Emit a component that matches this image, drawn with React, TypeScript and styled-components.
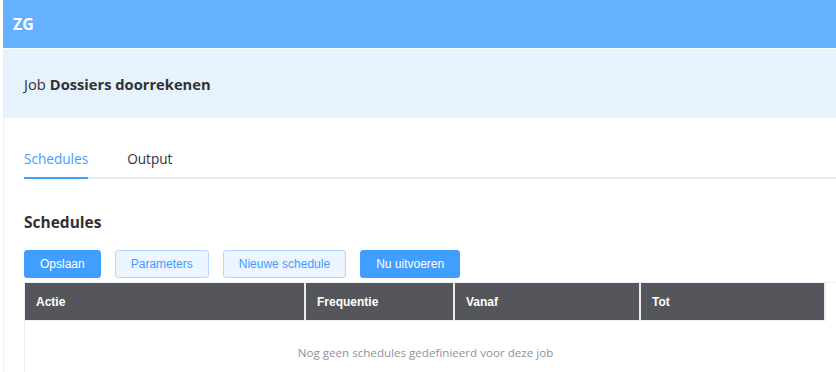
import styled, { createGlobalStyle } from "styled-components"

const GlobalStyle = createGlobalStyle`
    html, body {
        margin: 0;
        padding: 0;
        background: #ffffff;
        font-family: "Open Sans", "Noto Sans", Arial, sans-serif;
        color: #303133;
    }
`

const Page = styled.div`
    padding-left: 3px;
    height: 372px;
    overflow: hidden;
`

const TopBar = styled.header`
    height: 48px;
    background: #66b1ff;
    display: flex;
    align-items: center;
    padding-left: 10px;
    color: #ffffff;
    font-weight: 700;
    font-size: 16px;
    border-bottom: 1px solid #ffffff;
`

const TitleBand = styled.div`
    height: 69px;
    background: #e6f2fe;
    display: flex;
    align-items: center;
    padding-left: 21px;
    font-size: 14.7px;
    color: #303133;

    b {
        font-weight: 700;
        margin-left: 4px;
    }
`

const Content = styled.main`
    border-left: 1px solid #ebeef5;
    padding: 22px 0 0 20px;
    min-height: 260px;
`

const TabBar = styled.div`
    display: flex;
    gap: 39px;
    border-bottom: 2px solid #e4e7ed;
`

const Tab = styled.div<{ $active?: boolean }>`
    height: 37px;
    line-height: 37px;
    font-size: 13.6px;
    font-weight: 500;
    color: ${(p) => (p.$active ? "#409eff" : "#303133")};
    box-shadow: ${(p) => (p.$active ? "inset 0 -2px 0 #409eff" : "none")};
    margin-bottom: -2px;
    padding-bottom: 2px;
`

const Heading = styled.h3`
    margin: 31px 0 16px;
    font-size: 15.5px;
    font-weight: 700;
    line-height: 24px;
    color: #303133;
`

const Toolbar = styled.div`
    display: flex;
    gap: 14px;
    margin-bottom: 4px;
`

const Button = styled.button<{ $primary?: boolean }>`
    height: 28px;
    padding: 0 15px;
    border-radius: 3px;
    font-family: "Liberation Sans", Arial, sans-serif;
    font-size: 12px;
    cursor: pointer;
    border: 1px solid ${(p) => (p.$primary ? "#409eff" : "#b3d8ff")};
    background: ${(p) => (p.$primary ? "#409eff" : "#ecf5ff")};
    color: ${(p) => (p.$primary ? "#ffffff" : "#409eff")};
`

const TableWrap = styled.div`
    border-top: 1px solid #ebeef5;
`

const Table = styled.div`
    width: 801px;
    border-left: 1px solid #ebeef5;
`

const HeaderRow = styled.div`
    display: grid;
    grid-template-columns: 279px 147px 184px 183px;
    column-gap: 2px;
    background: #e8eaee;
    border-right: 1px solid #ebeef5;
    border-bottom: 1px solid #ebeef5;
`

const HeaderCell = styled.div`
    height: 37px;
    display: flex;
    align-items: center;
    padding-left: 11px;
    background: #55565b;
    color: #ffffff;
    font-family: "Liberation Sans", Arial, sans-serif;
    font-weight: 700;
    font-size: 12px;
`

const Empty = styled.div`
    height: 62px;
    display: flex;
    align-items: center;
    justify-content: center;
    color: #909399;
    font-size: 11.6px;
`

const columns = ["Actie", "Frequentie", "Vanaf", "Tot"]

export default function App() {
    return (
        <Page>
            <GlobalStyle />
            <TopBar>ZG</TopBar>
            <TitleBand>
                Job<b>Dossiers doorrekenen</b>
            </TitleBand>
            <Content>
                <TabBar>
                    <Tab $active>Schedules</Tab>
                    <Tab>Output</Tab>
                </TabBar>
                <Heading>Schedules</Heading>
                <Toolbar>
                    <Button $primary>Opslaan</Button>
                    <Button>Parameters</Button>
                    <Button>Nieuwe schedule</Button>
                    <Button $primary>Nu uitvoeren</Button>
                </Toolbar>
                <TableWrap>
                    <Table>
                        <HeaderRow>
                            {columns.map((c) => (
                                <HeaderCell key={c}>{c}</HeaderCell>
                            ))}
                        </HeaderRow>
                        <Empty>Nog geen schedules gedefinieerd voor deze job</Empty>
                    </Table>
                </TableWrap>
            </Content>
        </Page>
    )
}
